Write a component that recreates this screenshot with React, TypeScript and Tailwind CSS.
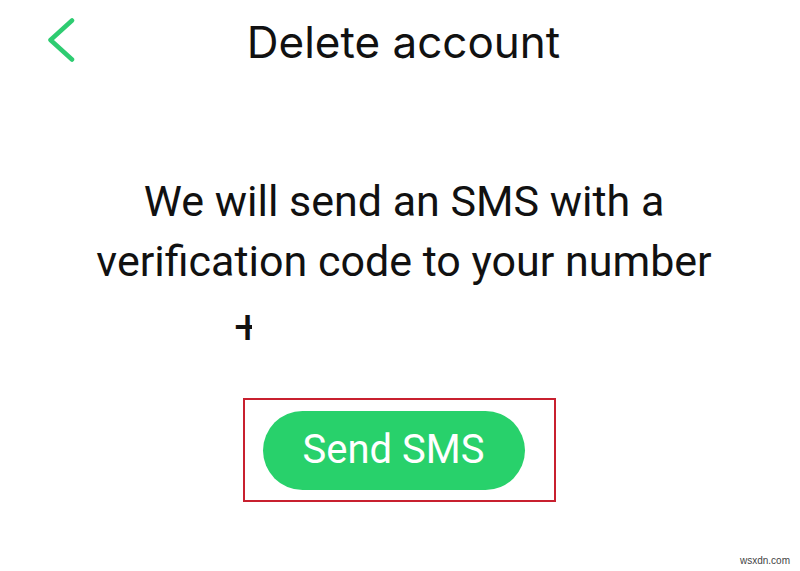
import React from "react";

export default function App() {
  return (
    <div className="w-[800px] h-[571px] bg-white relative overflow-hidden flex flex-col items-center">
      <div className="w-full h-[86px] relative flex items-center justify-center">
        <svg className="absolute left-[46px] top-[18px]" width="32" height="46" viewBox="0 0 32 46" fill="none">
          <path d="M26 2.5 L4.5 22 L26 41.5" stroke="#2ecc71" strokeWidth="4.5" strokeLinecap="round" strokeLinejoin="round" />
        </svg>
        <h1 className="text-[44px] text-[#111] leading-none mt-[-2px] pl-[7px]" style={{ fontFamily: "Inter, 'Noto Sans', sans-serif" }}>
          Delete account
        </h1>
      </div>
      <div className="mt-[85px] pl-[8px] text-center text-[#111] text-[43px] leading-[60px]" style={{ fontFamily: "Roboto, sans-serif" }}>
        <p>We will send an SMS with a</p>
        <p>verification code to your number</p>
      </div>
      <div className="w-full h-[48px] relative">
        <div className="absolute left-[234px] top-[16px] w-[18px] h-[36px] overflow-hidden">
          <span className="block text-[48px] leading-none text-[#111] -mt-[4px]" style={{ fontFamily: "Roboto, sans-serif" }}>+</span>
        </div>
      </div>
      <div className="mt-[59px] ml-[-2px] w-[313px] h-[104px] border-2 border-[#c8202f] flex items-center justify-center">
        <button className="w-[262px] h-[79px] rounded-full bg-[#28d16b] text-white text-[40px] ml-[-11px]" style={{ fontFamily: "Roboto, sans-serif" }}>
          Send SMS
        </button>
      </div>
      <span className="absolute right-[10px] bottom-[3px] text-[10px] text-[#444]" style={{ fontFamily: "'Liberation Sans', sans-serif" }}>wsxdn.com</span>
    </div>
  );
}
